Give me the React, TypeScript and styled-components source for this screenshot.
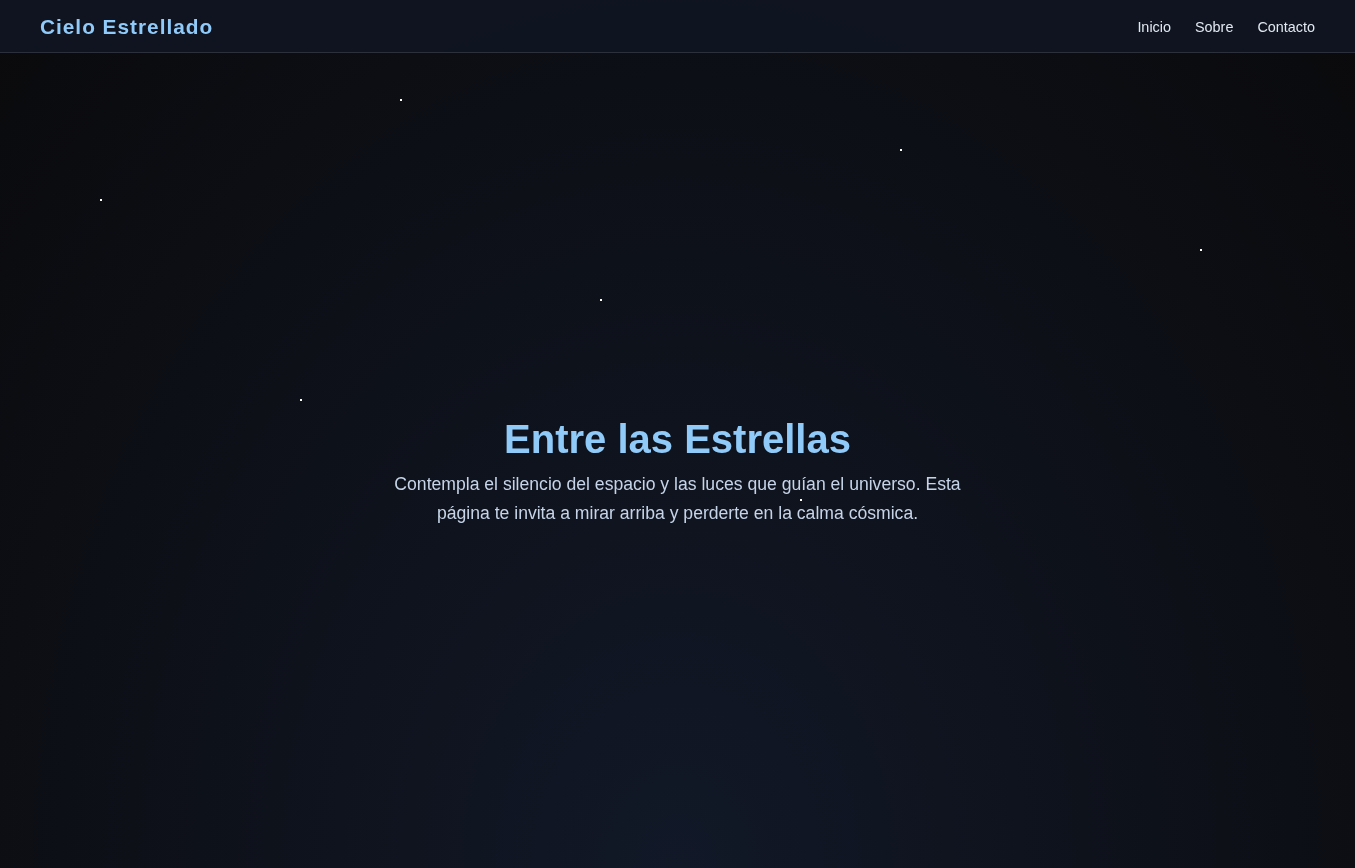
import React from "react";
import styled, { createGlobalStyle } from "styled-components";

const Global = createGlobalStyle`
  html, body {
    margin: 0;
    padding: 0;
  }
  body {
    font-family: "Liberation Sans", Arial, sans-serif;
    background: radial-gradient(ellipse at bottom, #111827 0%, #0a0a0c 100%) fixed;
    background-color: #0a0a0c;
    color: #e2e8f0;
    min-height: 100vh;
  }
`;

const StarLayer = styled.div`
  position: fixed;
  inset: 0;
  pointer-events: none;
  z-index: 0;
`;

const Star = styled.span`
  position: absolute;
  width: 2px;
  height: 2px;
  background: #ffffff;
`;

const Header = styled.header`
  position: sticky;
  top: 0;
  z-index: 2;
  height: 53px;
  box-sizing: border-box;
  display: flex;
  align-items: center;
  justify-content: space-between;
  padding: 0 39px 0 40px;
  background: rgba(16, 21, 34, 0.9);
  border-bottom: 1px solid rgba(255, 255, 255, 0.12);
`;

const Logo = styled.div`
  font-size: 20.8px;
  font-weight: 700;
  letter-spacing: 1px;
  color: #90caf9;
  margin-top: 2px;
`;

const Nav = styled.nav`
  display: flex;
  gap: 24px;
  margin-top: 1px;
  margin-right: 1px;
`;

const NavLink = styled.a`
  font-size: 14.4px;
  color: #e2e8f0;
  text-decoration: none;
`;

const Hero = styled.section`
  position: relative;
  z-index: 1;
  height: 815px;
  box-sizing: border-box;
  padding-top: 23px;
  display: flex;
  align-items: center;
  justify-content: center;
  text-align: center;
`;

const Content = styled.div`
  max-width: 600px;
`;

const Title = styled.h1`
  margin: 0 0 8px;
  font-size: 40px;
  font-weight: 700;
  color: #90caf9;
`;

const Text = styled.p`
  margin: 0;
  font-size: 17.6px;
  line-height: 29px;
  color: #c6d4e9;
`;

const stars = [
  [400, 99],
  [900, 149],
  [100, 199],
  [1200, 249],
  [600, 299],
  [300, 399],
  [800, 499],
];

export default function App() {
  return (
    <>
      <Global />
      <StarLayer>
        {stars.map(([x, y], i) => (
          <Star key={i} style={{ left: x, top: y }} />
        ))}
      </StarLayer>
      <Header>
        <Logo>Cielo Estrellado</Logo>
        <Nav>
          <NavLink href="#inicio">Inicio</NavLink>
          <NavLink href="#sobre">Sobre</NavLink>
          <NavLink href="#contacto">Contacto</NavLink>
        </Nav>
      </Header>
      <Hero id="inicio">
        <Content>
          <Title>Entre las Estrellas</Title>
          <Text>
            Contempla el silencio del espacio y las luces que guían el universo. Esta
            página te invita a mirar arriba y perderte en la calma cósmica.
          </Text>
        </Content>
      </Hero>
    </>
  );
}
